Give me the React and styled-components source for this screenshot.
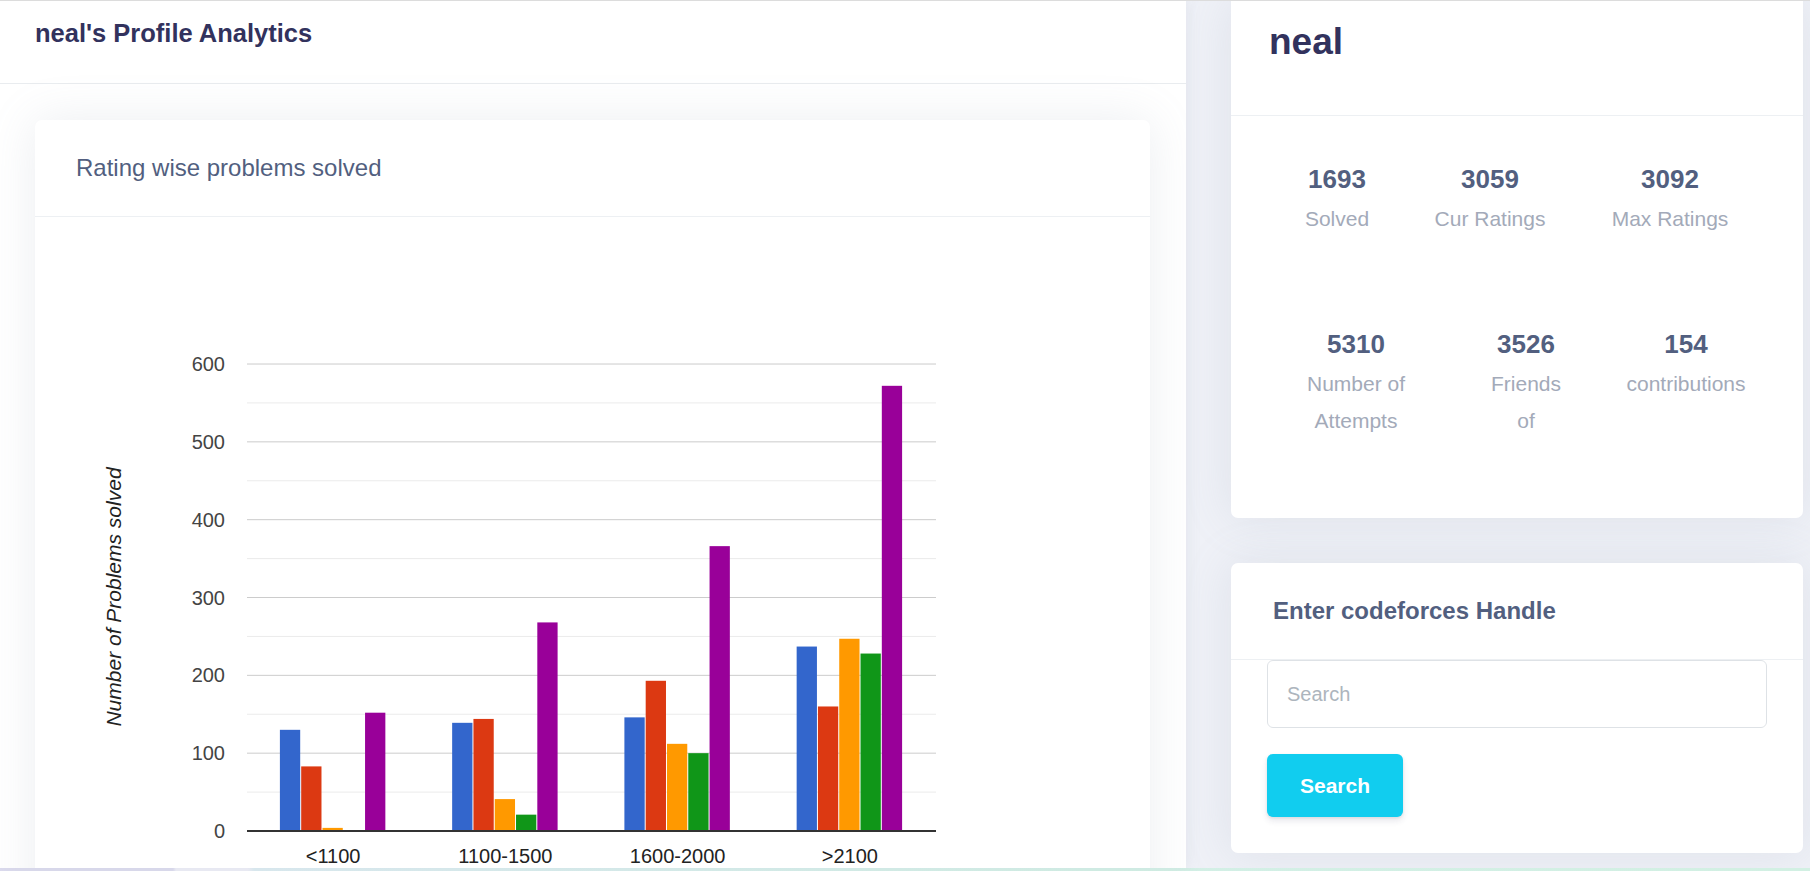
import React from 'react';
import styled, { createGlobalStyle } from 'styled-components';

const GlobalStyle = createGlobalStyle`
  html, body { margin: 0; padding: 0; }
  body {
    font-family: "Liberation Sans", Arial, sans-serif;
    background: #fff;
    overflow: hidden;
  }
  * { box-sizing: border-box; }
`;

const Page = styled.div`
  height: 871px;
  display: grid;
  grid-template-rows: 1fr 3px;
  border-top: 1px solid #dcdcdc;
  overflow: hidden;
`;

const Main = styled.div`
  display: grid;
  grid-template-columns: 1186px 1fr;
  min-height: 0;
`;

const Content = styled.main`
  display: flex;
  flex-direction: column;
  min-height: 0;
  overflow: hidden;
  background: #fff;
  position: relative;
  z-index: 1;
  box-shadow: 3px 0 12px rgba(136, 152, 170, 0.1);
`;

const TopBar = styled.header`
  height: 83px;
  flex-shrink: 0;
  border-bottom: 1px solid #e9ecef;
  padding: 17px 35px 0;
`;

const PageTitle = styled.h1`
  margin: 0;
  font-size: 25.5px;
  line-height: 30px;
  font-weight: 700;
  color: #32325d;
`;

const ContentBody = styled.div`
  padding: 36px 36px 0 35px;
  flex: 1;
  min-height: 0;
`;

const Card = styled.section`
  background: #fff;
  border-radius: ${(p) => (p.$flatTop ? '0 0 7px 7px' : '7px')};
  box-shadow: 0 0 48px rgba(136, 152, 170, 0.16);
  overflow: hidden;
`;

const CardHeader = styled.div`
  height: ${(p) => p.$h || 97}px;
  border-bottom: 1px solid #edf0f3;
  display: flex;
  align-items: ${(p) => (p.$top ? 'flex-start' : 'center')};
  padding: ${(p) => p.$pad || '0 41px'};
`;

const CardTitle = styled.h3`
  margin: 0;
  font-size: 24px;
  line-height: 30px;
  font-weight: ${(p) => (p.$bold ? 700 : 400)};
  color: #525f7f;
`;

const ChartWrap = styled.div`
  height: 700px;
`;

const Sidebar = styled.aside`
  background: #eff1f7;
  padding: 0 7px 0 45px;
  display: flex;
  flex-direction: column;
  gap: 45px;
  min-height: 0;
`;

const ProfileName = styled.h2`
  margin: 0;
  font-size: 37px;
  line-height: 44px;
  font-weight: 700;
  color: #32325d;
`;

const StatsBody = styled.div`
  padding: 46px 0 79px 39px;
  display: flex;
  flex-direction: column;
  gap: 90px;
`;

const StatRow = styled.div`
  display: grid;
  grid-template-columns: ${(p) => p.$cols};
`;

const Stat = styled.div`
  text-align: center;
`;

const StatNumber = styled.div`
  font-size: 26px;
  line-height: 34px;
  font-weight: 700;
  color: #525f7f;
`;

const StatLabel = styled.div`
  margin: 4px auto 0;
  max-width: ${(p) => p.$max || 'none'};
  font-size: 21px;
  line-height: 37px;
  color: #a3aab9;
`;

const SearchBody = styled.div`
  padding: 0 36px 36px;
  display: flex;
  flex-direction: column;
  align-items: flex-start;
  gap: 26px;
`;

const SearchInput = styled.input`
  width: 100%;
  height: 68px;
  border: 1px solid #dee2e6;
  border-radius: 6px;
  padding: 0 19px;
  font-family: inherit;
  font-size: 20px;
  color: #525f7f;
  background: #fff;
  outline: none;
  &::placeholder { color: #adb5bd; }
`;

const SearchButton = styled.button`
  width: 136px;
  height: 63px;
  border: none;
  border-radius: 6px;
  background: #11cdef;
  color: #fff;
  font-family: inherit;
  font-size: 21px;
  font-weight: 700;
  box-shadow: 0 4px 6px rgba(50, 50, 93, 0.11), 0 1px 3px rgba(0, 0, 0, 0.08);
  cursor: pointer;
`;

const BottomStrip = styled.div`
  background: linear-gradient(
    to right,
    #dcdbee 0px,
    #dcdbee 173px,
    #ededf6 176px,
    #ededf6 248px,
    #dcebf1 254px,
    #d3efe6 60%,
    #d2f0e3 100%
  );
`;

const COLORS = ['#3366cc', '#dc3912', '#ff9900', '#109618', '#990099'];
const GROUPS = [
  { label: '<1100', values: [130, 83, 4, 1, 152] },
  { label: '1100-1500', values: [139, 144, 41, 21, 268] },
  { label: '1600-2000', values: [146, 193, 112, 100, 366] },
  { label: '>2100', values: [237, 160, 247, 228, 572] },
];

function RatingChart() {
  const left = 247;
  const right = 936;
  const zeroY = 831;
  const k = 0.7783;
  const y = (v) => zeroY - v * k;
  const gw = (right - left) / 4;
  const barGroup = gw * 0.618;
  const bw = barGroup / 5;
  const grid = [];
  for (let v = 50; v <= 600; v += 50) grid.push(v);
  return (
    <svg width="1115" height="700" viewBox="35 217 1115 700" style={{ display: 'block' }}>
      {grid.map((v) => (
        <line
          key={v}
          x1={left}
          x2={right}
          y1={y(v)}
          y2={y(v)}
          stroke={v % 100 === 0 ? '#cccccc' : '#ebebeb'}
          strokeWidth="1"
        />
      ))}
      {[0, 100, 200, 300, 400, 500, 600].map((v) => (
        <text
          key={v}
          x="225"
          y={y(v) + 7}
          textAnchor="end"
          fontSize="20"
          fill="#444"
          fontFamily="Liberation Sans, Arial, sans-serif"
        >
          {v}
        </text>
      ))}
      {GROUPS.map((g, gi) => {
        const cx = left + gw * (gi + 0.5);
        const start = cx - barGroup / 2;
        return (
          <g key={g.label}>
            {g.values.map((v, bi) => (
              <rect
                key={bi}
                x={start + bi * bw}
                y={y(v)}
                width={bw - 1}
                height={v * k}
                fill={COLORS[bi]}
              />
            ))}
            <text
              x={cx}
              y="863"
              textAnchor="middle"
              fontSize="20"
              fill="#222"
              fontFamily="Liberation Sans, Arial, sans-serif"
            >
              {g.label}
            </text>
          </g>
        );
      })}
      <rect x={left} y={zeroY - 1} width={right - left} height="2" fill="#333" />
      <text
        x="121"
        y="597"
        transform="rotate(-90 121 597)"
        textAnchor="middle"
        fontSize="21"
        fontStyle="italic"
        fill="#222"
        fontFamily="Liberation Sans, Arial, sans-serif"
      >
        Number of Problems solved
      </text>
    </svg>
  );
}

const ROW1 = [
  { n: '1693', l: 'Solved' },
  { n: '3059', l: 'Cur Ratings' },
  { n: '3092', l: 'Max Ratings' },
];
const ROW2 = [
  { n: '5310', l: 'Number of Attempts', max: '112px' },
  { n: '3526', l: 'Friends of', max: '84px' },
  { n: '154', l: 'contributions' },
];

export default function App() {
  return (
    <>
      <GlobalStyle />
      <Page>
        <Main>
          <Content>
            <TopBar>
              <PageTitle>neal's Profile Analytics</PageTitle>
            </TopBar>
            <ContentBody>
              <Card>
                <CardHeader>
                  <CardTitle>Rating wise problems solved</CardTitle>
                </CardHeader>
                <ChartWrap>
                  <RatingChart />
                </ChartWrap>
              </Card>
            </ContentBody>
          </Content>
          <Sidebar>
            <Card $flatTop>
              <CardHeader $h={115} $top $pad="19px 38px 0">
                <ProfileName>neal</ProfileName>
              </CardHeader>
              <StatsBody>
                <StatRow $cols="134px 172px 188px">
                  {ROW1.map((s) => (
                    <Stat key={s.l}>
                      <StatNumber>{s.n}</StatNumber>
                      <StatLabel>{s.l}</StatLabel>
                    </Stat>
                  ))}
                </StatRow>
                <StatRow $cols="172px 168px 152px">
                  {ROW2.map((s) => (
                    <Stat key={s.l}>
                      <StatNumber>{s.n}</StatNumber>
                      <StatLabel $max={s.max}>{s.l}</StatLabel>
                    </Stat>
                  ))}
                </StatRow>
              </StatsBody>
            </Card>
            <Card>
              <CardHeader $pad="0 42px">
                <CardTitle $bold>Enter codeforces Handle</CardTitle>
              </CardHeader>
              <SearchBody>
                <SearchInput placeholder="Search" />
                <SearchButton>Search</SearchButton>
              </SearchBody>
            </Card>
          </Sidebar>
        </Main>
        <BottomStrip />
      </Page>
    </>
  );
}
